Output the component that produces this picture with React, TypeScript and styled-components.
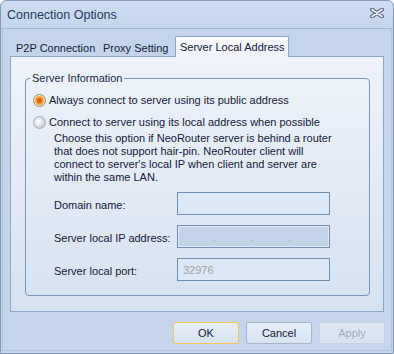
import React from "react";
import styled, { createGlobalStyle } from "styled-components";

const GlobalStyle = createGlobalStyle`
  html, body {
    margin: 0;
    padding: 0;
    background: #ffffff;
  }
  body {
    font-family: "Liberation Sans", Arial, sans-serif;
    font-size: 11px;
    color: #14203a;
  }
`;

const Window = styled.div`
  box-sizing: border-box;
  width: 394px;
  height: 354px;
  border: 1px solid #8799b3;
  border-radius: 6px 6px 0 0;
  background: linear-gradient(#cddcef, #c4d5eb 30px, #c5d6ec);
  display: flex;
  flex-direction: column;
  overflow: hidden;
`;

const TitleBar = styled.div`
  height: 27px;
  flex: none;
  display: flex;
  align-items: center;
  justify-content: space-between;
  padding: 0 8px 0 6px;
  border-bottom: 1px solid #a6b9d3;
`;

const Title = styled.span`
  font-size: 12.5px;
  color: #1f3b62;
  padding-top: 1px;
`;

const CloseButton = styled.button`
  border: 0;
  background: none;
  padding: 0;
  width: 16px;
  height: 12px;
  display: flex;
  align-items: center;
  justify-content: center;
  margin-top: -3px;
`;

const Client = styled.div`
  flex: 1;
  display: flex;
  flex-direction: column;
  padding: 7px 8px 0 8px;
  margin: 0 1px 2px 1px;
  border: 1px solid #b3c4da;
  border-top: 0;
`;

const TabStrip = styled.div`
  display: flex;
  height: 21px;
  align-items: stretch;
  margin: 0 -1px -1px -1px;
  position: relative;
  z-index: 1;
`;

const Tab = styled.div<{ $active?: boolean; $w: number }>`
  box-sizing: border-box;
  width: ${(p) => p.$w}px;
  display: flex;
  align-items: center;
  padding: ${(p) => (p.$active ? "0 0 0 4px" : "2px 0 0 6px")};
  white-space: nowrap;
  color: #14203a;
  ${(p) =>
    p.$active &&
    `
    border: 1px solid #8da6c6;
    border-bottom: 0;
    border-radius: 2px 2px 0 0;
    background: linear-gradient(#f7fafd, #eef3fa);
  `}
`;

const Panel = styled.div`
  box-sizing: border-box;
  height: 256px;
  margin: 0 -1px;
  border: 1px solid #8da6c6;
  background: linear-gradient(#eef3fa, #d6e2f1);
  padding: 15px 13px 0 14px;
`;

const Group = styled.fieldset`
  margin: 0;
  border: 1px solid #7c96b8;
  border-radius: 4px;
  padding: 0 0 13px 7px;
  height: 224px;
  box-sizing: border-box;
`;

const Legend = styled.legend`
  margin-left: -3px;
  padding: 0 2px;
  line-height: 13px;
  color: #1b2a44;
`;

const RadioRow = styled.label`
  display: flex;
  align-items: center;
  gap: 2px;
  height: 16px;
  margin-top: ${(p: { $top: number }) => p.$top}px;
  white-space: nowrap;
`;

const RadioDot = styled.span<{ $checked?: boolean }>`
  box-sizing: border-box;
  width: 13px;
  height: 13px;
  border-radius: 50%;
  border: 1px solid ${(p) => (p.$checked ? "#8f8a80" : "#a5adb8")};
  background: ${(p) =>
    p.$checked
      ? "radial-gradient(circle, #d9620c 0 2px, #f29a30 3px, #f7b75a 4.5px, #fde2b8 5px)"
      : "radial-gradient(circle at 40% 40%, #ffffff 0, #e8ecf1 3px, #c9d0da 6px)"};
  margin-right: 1px;
`;

const Description = styled.p`
  margin: 2px 0 0 21px;
  line-height: 13px;
  white-space: nowrap;
`;

const Form = styled.div`
  display: grid;
  grid-template-columns: 123px 153px;
  grid-auto-rows: 23px;
  row-gap: 10px;
  margin: 8px 0 0 21px;
  align-items: center;
`;

const FieldLabel = styled.span`
  padding-top: 2px;
`;

const TextBox = styled.div<{ $disabled?: boolean }>`
  box-sizing: border-box;
  height: 23px;
  border: 1px solid #6f8fb8;
  background: ${(p) => (p.$disabled ? "#c3d4e9" : "#dce8f5")};
  box-shadow: ${(p) => (p.$disabled ? "inset 0 0 0 1px #e0e9f4" : "none")};
  display: flex;
  align-items: center;
  padding-left: 5px;
  color: #a3a3a3;
`;

const IpBox = styled(TextBox)`
  padding: 0;
  display: grid;
  grid-template-columns: repeat(4, 1fr);
`;

const IpSegment = styled.span`
  text-align: right;
  color: #a0a8b0;
  font-size: 10px;
  line-height: 10px;
  padding-top: 2px;
  &:last-child {
    visibility: hidden;
  }
`;

const ButtonRow = styled.div`
  display: flex;
  justify-content: flex-end;
  gap: 7px;
  padding: 10px 0 0 0;
  margin-right: -2px;
`;

const Button = styled.button<{ $focused?: boolean }>`
  box-sizing: border-box;
  width: 66px;
  height: 22px;
  font-family: "Liberation Sans", Arial, sans-serif;
  font-size: 11px;
  border-radius: 2px;
  border: 1px solid ${(p) => (p.$focused ? "#f2c957" : "#a3b7d0")};
  background: linear-gradient(#e6eef8, #d7e3f1);
  color: #14203a;
  padding: 0;
  &:disabled {
    border-color: #c3d1e3;
    color: #a4adba;
    background: linear-gradient(#dfe8f4, #d6e2f1);
  }
`;

function CloseIcon() {
  return (
    <svg width="14" height="10" viewBox="0 0 14 10">
      <path d="M2 1.5 L12 8.5 M12 1.5 L2 8.5" stroke="#5f6f86" strokeWidth="4" strokeLinecap="round" />
      <path d="M2 1.5 L12 8.5 M12 1.5 L2 8.5" stroke="#eef2f7" strokeWidth="1.6" strokeLinecap="round" />
    </svg>
  );
}

export default function App() {
  return (
    <>
      <GlobalStyle />
      <Window>
        <TitleBar>
          <Title>Connection Options</Title>
          <CloseButton aria-label="Close">
            <CloseIcon />
          </CloseButton>
        </TitleBar>
        <Client>
          <TabStrip>
            <Tab $w={87}>P2P Connection</Tab>
            <Tab $w={78}>Proxy Setting</Tab>
            <Tab $w={114} $active>
              Server Local Address
            </Tab>
          </TabStrip>
          <Panel>
            <Group>
              <Legend>Server Information</Legend>
              <RadioRow $top={7}>
                <RadioDot $checked />
                Always connect to server using its public address
              </RadioRow>
              <RadioRow $top={6}>
                <RadioDot />
                Connect to server using its local address when possible
              </RadioRow>
              <Description>
                Choose this option if NeoRouter server is behind a router
                <br />
                that does not support hair-pin. NeoRouter client will
                <br />
                connect to server's local IP when client and server are
                <br />
                within the same LAN.
              </Description>
              <Form>
                <FieldLabel>Domain name:</FieldLabel>
                <TextBox />
                <FieldLabel>Server local IP address:</FieldLabel>
                <IpBox $disabled>
                  <IpSegment>.</IpSegment>
                  <IpSegment>.</IpSegment>
                  <IpSegment>.</IpSegment>
                  <IpSegment>.</IpSegment>
                </IpBox>
                <FieldLabel>Server local port:</FieldLabel>
                <TextBox>32976</TextBox>
              </Form>
            </Group>
          </Panel>
          <ButtonRow>
            <Button $focused>OK</Button>
            <Button>Cancel</Button>
            <Button disabled>Apply</Button>
          </ButtonRow>
        </Client>
      </Window>
    </>
  );
}
